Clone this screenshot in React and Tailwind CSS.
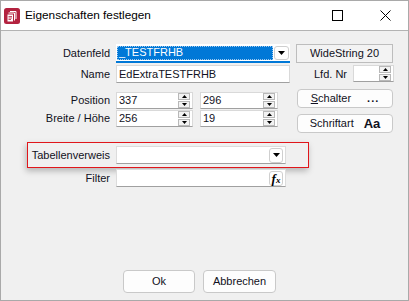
import React from "react";

function Tri({ down }) {
  return (
    <svg width="5" height="3" viewBox="0 0 5 3" className="block">
      <path d={down ? "M0 0H5L2.5 3Z" : "M2.5 0L5 3H0Z"} fill="#000" />
    </svg>
  );
}

function Spin() {
  return (
    <div className="flex flex-col gap-[1px] mr-[2px]">
      <div className="w-[12px] h-[7px] border border-[#b8b8b8] bg-[#f2f2f2] flex items-center justify-center">
        <Tri />
      </div>
      <div className="w-[12px] h-[7px] border border-[#b8b8b8] bg-[#f2f2f2] flex items-center justify-center">
        <Tri down />
      </div>
    </div>
  );
}

function SpinEdit({ value, w }) {
  return (
    <div className={`${w} h-[17px] bg-white border border-[#d9d9d9] border-b-[#a0a0a0] flex items-center`}>
      <span className="flex-1 pl-[2px] leading-none">{value}</span>
      <Spin />
    </div>
  );
}

function DropArrow() {
  return (
    <svg width="7" height="4" viewBox="0 0 7 4" className="block">
      <path d="M0 0H7L3.5 4Z" fill="#000" />
    </svg>
  );
}

function SmallBtn({ children }) {
  return (
    <div className="w-[14px] h-[15px] mr-[2px] rounded-[3px] border border-[#cfcfcf] bg-white flex items-center justify-center">
      {children}
    </div>
  );
}

export default function App() {
  return (
    <div className="w-[409px] h-[301px] border border-[#a9a9a9] bg-[#f0f0f0] flex flex-col font-['Liberation_Sans',Arial,sans-serif] text-[11px] text-[#111122] overflow-hidden">
      {/* title bar */}
      <div className="h-[30px] bg-white border-b border-[#b3b3b3] flex items-center shrink-0">
        <svg width="16" height="16" viewBox="0 0 16 16" className="ml-[3px] shrink-0">
          <rect x="0" y="0" width="16" height="16" rx="2.5" fill="#b3223f" />
          <path d="M6 3.5H12V11" stroke="#fff" strokeWidth="1" fill="none" />
          <path d="M4.5 5H10.5V12.5" stroke="#fff" strokeWidth="1" fill="none" />
          <rect x="3.5" y="6.5" width="5.5" height="7" fill="#fff" />
          <path d="M4.5 8.5H8M4.5 10H8M4.5 11.5H7" stroke="#b3223f" strokeWidth="0.8" />
        </svg>
        <span className="ml-[5px] text-[11.8px] text-black">Eigenschaften festlegen</span>
        <svg width="11" height="11" viewBox="0 0 11 11" className="ml-auto">
          <rect x="0.5" y="0.5" width="10" height="10" fill="none" stroke="#000" strokeWidth="1" />
        </svg>
        <svg width="11" height="11" viewBox="0 0 11 11" className="ml-[37px] mr-[17px]">
          <path d="M0.5 0.5L10.5 10.5M10.5 0.5L0.5 10.5" stroke="#000" strokeWidth="1" />
        </svg>
      </div>

      {/* client */}
      <div className="flex-1 flex flex-col pt-[13px]">
        {/* Datenfeld */}
        <div className="flex items-start">
          <span className="w-[109px] text-right leading-[19px]">Datenfeld</span>
          <div className="ml-[6px] w-[174px] h-[19px] bg-white border-b-2 border-[#0078d7] flex items-center">
            <div className="ml-[1px] flex-1 h-[14px] bg-[#0078d7] border border-dotted border-[#9cc8ef] flex items-center">
              <span className="pl-[1px] text-white leading-none">_TESTFRHB</span>
            </div>
            <div className="ml-[1px] w-[15px] h-[14px] mr-[1px] rounded-[3px] border border-[#cfcfcf] bg-white flex items-center justify-center">
              <DropArrow />
            </div>
          </div>
          <div className="ml-[6px] w-[97px] h-[19px] border border-[#bdbdbd] bg-[#f3f3f3] flex items-center justify-center">
            WideString 20
          </div>
        </div>

        {/* Name */}
        <div className="flex items-start mt-[2px]">
          <span className="w-[109px] text-right leading-[18px]">Name</span>
          <div className="ml-[6px] w-[174px] h-[18px] bg-white border border-[#d9d9d9] border-b-[#a0a0a0] flex items-center">
            <span className="pl-[2px]">EdExtraTESTFRHB</span>
          </div>
          <span className="w-[57px] text-right leading-[18px]">Lfd. Nr</span>
          <div className="ml-[6px]">
            <SpinEdit value="" w="w-[41px]" />
          </div>
        </div>

        {/* Position / Breite + buttons */}
        <div className="flex items-start mt-[6px]">
          <div className="flex flex-col gap-[1px] mt-[3px]">
            <div className="flex items-center">
              <span className="w-[109px] text-right">Position</span>
              <div className="ml-[6px]"><SpinEdit value="337" w="w-[77px]" /></div>
              <div className="ml-[7px]"><SpinEdit value="296" w="w-[78px]" /></div>
            </div>
            <div className="flex items-center">
              <span className="w-[109px] text-right">Breite / Höhe</span>
              <div className="ml-[6px]"><SpinEdit value="256" w="w-[77px]" /></div>
              <div className="ml-[7px]"><SpinEdit value="19" w="w-[78px]" /></div>
            </div>
          </div>
          <div className="ml-[19px] flex flex-col gap-[6px]">
            <div className="w-[96px] h-[19px] rounded-[4px] border border-[#c9c9c9] bg-[#fdfdfd] flex items-center justify-center gap-[16px]">
              <span><span className="underline">S</span>chalter</span>
              <span className="font-bold tracking-[1px]">...</span>
            </div>
            <div className="w-[96px] h-[19px] rounded-[4px] border border-[#c9c9c9] bg-[#fdfdfd] flex items-center justify-center gap-[10px]">
              <span>Schriftart</span>
              <span className="font-bold text-[13px]">Aa</span>
            </div>
          </div>
        </div>

        {/* Tabellenverweis */}
        <div className="ml-[26px] mt-[9px] w-[282px] h-[26px] border border-[#e0161b] shadow-[-1px_3px_6px_rgba(0,0,0,0.25)] flex items-center">
          <span className="w-[82px] text-right">Tabellenverweis</span>
          <div className="ml-[6px] w-[170px] h-[18px] bg-white border border-[#dcdcdc] border-b-[#a0a0a0] flex items-center justify-end">
            <SmallBtn><DropArrow /></SmallBtn>
          </div>
        </div>

        {/* Filter */}
        <div className="flex items-center mt-[1px]">
          <span className="w-[109px] text-right">Filter</span>
          <div className="ml-[6px] w-[170px] h-[18px] bg-white border border-[#dcdcdc] border-b-[#a0a0a0] flex items-center justify-end">
            <SmallBtn>
              <span className="font-['Liberation_Serif',serif] italic font-bold text-[13px] leading-none text-black">
                f<span className="text-[9px]">x</span>
              </span>
            </SmallBtn>
          </div>
        </div>

        {/* buttons */}
        <div className="mt-auto mb-[7px] flex gap-[8px] pl-[122px]">
          <div className="w-[72px] h-[23px] rounded-[4px] border border-[#c9c9c9] bg-[#fdfdfd] flex items-center justify-center">
            Ok
          </div>
          <div className="w-[73px] h-[23px] rounded-[4px] border border-[#c9c9c9] bg-[#fdfdfd] flex items-center justify-center">
            Abbrechen
          </div>
        </div>
      </div>
    </div>
  );
}
